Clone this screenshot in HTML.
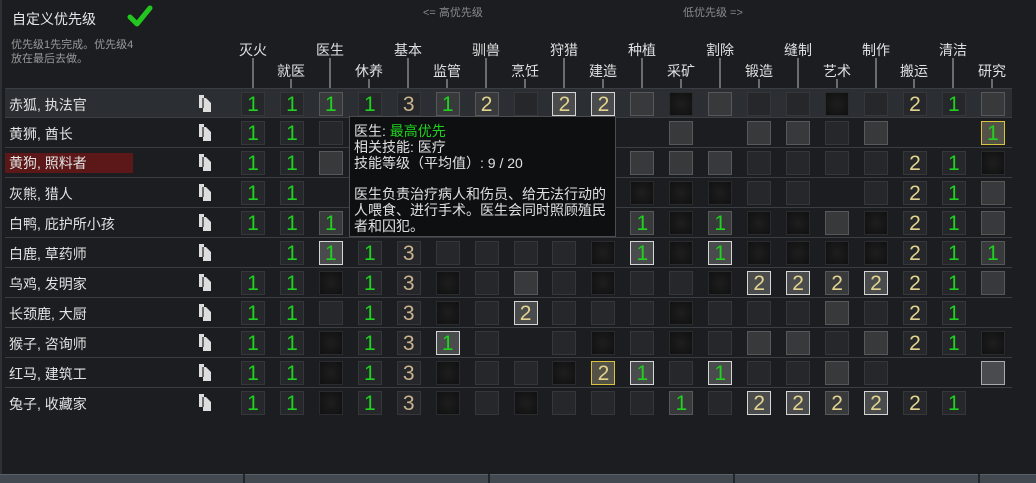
<!DOCTYPE html>
<html><head><meta charset="utf-8"><style>
*{margin:0;padding:0;box-sizing:border-box}
body{width:1036px;height:483px;background:#1b1d21;font-family:"Liberation Sans","Noto Sans CJK SC",sans-serif;color:#ddd;position:relative;overflow:hidden}
.a{position:absolute;white-space:nowrap}
.hd{font-size:14px;color:#e0e0e0;transform:translateX(-50%)}
.vl{position:absolute;width:2px;background:#6a6d70}
.row{position:absolute;left:5px;width:1007px;height:30px;border-bottom:1px solid #3a3d42}
.nm{position:absolute;left:4px;top:6px;font-size:14px;color:#e2e2e2}
.cp{position:absolute;left:194px;top:6px;width:12px;height:17px}
.g20{position:absolute;left:228.5px;top:0;display:grid;grid-template-columns:repeat(20,38.95px);height:30px}
.g20>span{display:flex;align-items:center;justify-content:center}
.b{display:flex;align-items:center;justify-content:center;width:24px;height:24px;border:1px solid #35373a;background:#25272a;font-style:normal;font-size:21px;line-height:1}
.k{background:radial-gradient(#1e1e1e,#101010);border-color:#2a2b2d}
.g{background:#38393b;border-color:#56585a}
.w{background:#4a4b4c;border-color:#d5d5d5}
.y{background:#545246;border-color:#d8c43c}
.n1{color:#1ed21e}.n2{color:#e2d48e}.n3{color:#cbb48e}
</style></head><body>
<div class="a" style="left:0;top:0;width:2px;height:483px;background:#2d3035"></div>
<div class="a" style="left:12px;top:9px;font-size:14px;color:#e6e6e6">自定义优先级</div>
<svg class="a" style="left:127px;top:4px" width="26" height="24" viewBox="0 0 26 24"><path d="M3 13 L10 20 L23 4" stroke="#22c61e" stroke-width="5" fill="none" stroke-linecap="round" stroke-linejoin="round"/></svg>
<div class="a" style="left:11px;top:38px;font-size:11px;line-height:14px;color:#9a9a9a">优先级1先完成。优先级4<br>放在最后去做。</div>
<div class="a" style="left:423px;top:4px;font-size:11px;color:#8a8a8a">&lt;= 高优先级</div>
<div class="a" style="left:683px;top:4px;font-size:11px;color:#8a8a8a">低优先级 =&gt;</div>

<div class="a hd" style="left:253px;top:40px">灭火</div><div class="vl" style="left:252px;top:58px;height:30px"></div>
<div class="a hd" style="left:291px;top:61px">就医</div><div class="vl" style="left:290px;top:79px;height:9px"></div>
<div class="a hd" style="left:330px;top:40px">医生</div><div class="vl" style="left:329px;top:58px;height:30px"></div>
<div class="a hd" style="left:369px;top:61px">休养</div><div class="vl" style="left:368px;top:79px;height:9px"></div>
<div class="a hd" style="left:408px;top:40px">基本</div><div class="vl" style="left:407px;top:58px;height:30px"></div>
<div class="a hd" style="left:447px;top:61px">监管</div><div class="vl" style="left:446px;top:79px;height:9px"></div>
<div class="a hd" style="left:486px;top:40px">驯兽</div><div class="vl" style="left:485px;top:58px;height:30px"></div>
<div class="a hd" style="left:525px;top:61px">烹饪</div><div class="vl" style="left:524px;top:79px;height:9px"></div>
<div class="a hd" style="left:564px;top:40px">狩猎</div><div class="vl" style="left:563px;top:58px;height:30px"></div>
<div class="a hd" style="left:603px;top:61px">建造</div><div class="vl" style="left:602px;top:79px;height:9px"></div>
<div class="a hd" style="left:642px;top:40px">种植</div><div class="vl" style="left:641px;top:58px;height:30px"></div>
<div class="a hd" style="left:681px;top:61px">采矿</div><div class="vl" style="left:680px;top:79px;height:9px"></div>
<div class="a hd" style="left:720px;top:40px">割除</div><div class="vl" style="left:719px;top:58px;height:30px"></div>
<div class="a hd" style="left:759px;top:61px">锻造</div><div class="vl" style="left:758px;top:79px;height:9px"></div>
<div class="a hd" style="left:798px;top:40px">缝制</div><div class="vl" style="left:797px;top:58px;height:30px"></div>
<div class="a hd" style="left:837px;top:61px">艺术</div><div class="vl" style="left:836px;top:79px;height:9px"></div>
<div class="a hd" style="left:876px;top:40px">制作</div><div class="vl" style="left:875px;top:58px;height:30px"></div>
<div class="a hd" style="left:914px;top:61px">搬运</div><div class="vl" style="left:913px;top:79px;height:9px"></div>
<div class="a hd" style="left:953px;top:40px">清洁</div><div class="vl" style="left:952px;top:58px;height:30px"></div>
<div class="a hd" style="left:992px;top:61px">研究</div><div class="vl" style="left:991px;top:79px;height:9px"></div>

<div class="row" style="top:88px;background:#2b2e32;border-top:1px solid #3a3d42"><div class="nm">赤狐, 执法官</div><svg class="cp" viewBox="0 0 12 17"><path d="M0 0h5v3h2l5 5v9H4v-4H0z" fill="#ddd"/><path d="M4 3v10" stroke="#222" stroke-width="1.2"/></svg>
<div class="g20"><span><i class="b n1">1</i></span><span><i class="b n1">1</i></span><span><i class="b g n1">1</i></span><span><i class="b n1">1</i></span><span><i class="b n3">3</i></span><span><i class="b g n1">1</i></span><span><i class="b g n2">2</i></span><span><i class="b"></i></span><span><i class="b w n2">2</i></span><span><i class="b w n2">2</i></span><span><i class="b g"></i></span><span><i class="b k"></i></span><span><i class="b g"></i></span><span><i class="b"></i></span><span><i class="b"></i></span><span><i class="b k"></i></span><span><i class="b"></i></span><span><i class="b n2">2</i></span><span><i class="b n1">1</i></span><span><i class="b g"></i></span></div></div>

<div class="row" style="top:118px"><div class="nm">黄狮, 酋长</div><svg class="cp" viewBox="0 0 12 17"><path d="M0 0h5v3h2l5 5v9H4v-4H0z" fill="#ddd"/><path d="M4 3v10" stroke="#222" stroke-width="1.2"/></svg>
<div class="g20"><span><i class="b n1">1</i></span><span><i class="b n1">1</i></span><span><i class="b"></i></span><span></span><span></span><span></span><span></span><span></span><span></span><span></span><span></span><span><i class="b g"></i></span><span></span><span><i class="b g"></i></span><span><i class="b g"></i></span><span><i class="b"></i></span><span><i class="b g"></i></span><span></span><span></span><span><i class="b y n1">1</i></span></div></div>

<div class="row" style="top:148px"><div class="nm" style="background:#5c1818;left:0;padding:0 8px 0 4px;width:128px;top:5px;height:20px">黄狗, 照料者</div><svg class="cp" viewBox="0 0 12 17"><path d="M0 0h5v3h2l5 5v9H4v-4H0z" fill="#ddd"/><path d="M4 3v10" stroke="#222" stroke-width="1.2"/></svg>
<div class="g20"><span><i class="b n1">1</i></span><span><i class="b n1">1</i></span><span><i class="b g"></i></span><span></span><span></span><span></span><span></span><span></span><span></span><span></span><span><i class="b g"></i></span><span><i class="b g"></i></span><span><i class="b g"></i></span><span><i class="b"></i></span><span><i class="b"></i></span><span><i class="b"></i></span><span><i class="b"></i></span><span><i class="b n2">2</i></span><span><i class="b n1">1</i></span><span><i class="b k"></i></span></div></div>

<div class="row" style="top:178px"><div class="nm">灰熊, 猎人</div><svg class="cp" viewBox="0 0 12 17"><path d="M0 0h5v3h2l5 5v9H4v-4H0z" fill="#ddd"/><path d="M4 3v10" stroke="#222" stroke-width="1.2"/></svg>
<div class="g20"><span><i class="b n1">1</i></span><span><i class="b n1">1</i></span><span></span><span></span><span></span><span></span><span></span><span></span><span></span><span></span><span><i class="b k"></i></span><span><i class="b k"></i></span><span><i class="b k"></i></span><span><i class="b"></i></span><span><i class="b"></i></span><span></span><span><i class="b"></i></span><span><i class="b n2">2</i></span><span><i class="b n1">1</i></span><span><i class="b g"></i></span></div></div>

<div class="row" style="top:208px"><div class="nm">白鸭, 庇护所小孩</div><svg class="cp" viewBox="0 0 12 17"><path d="M0 0h5v3h2l5 5v9H4v-4H0z" fill="#ddd"/><path d="M4 3v10" stroke="#222" stroke-width="1.2"/></svg>
<div class="g20"><span><i class="b n1">1</i></span><span><i class="b n1">1</i></span><span><i class="b g n1">1</i></span><span></span><span></span><span></span><span></span><span></span><span></span><span></span><span><i class="b g n1">1</i></span><span><i class="b k"></i></span><span><i class="b g n1">1</i></span><span><i class="b k"></i></span><span><i class="b k"></i></span><span><i class="b g"></i></span><span><i class="b k"></i></span><span><i class="b n2">2</i></span><span><i class="b n1">1</i></span><span><i class="b g"></i></span></div></div>

<div class="row" style="top:238px"><div class="nm">白鹿, 草药师</div><svg class="cp" viewBox="0 0 12 17"><path d="M0 0h5v3h2l5 5v9H4v-4H0z" fill="#ddd"/><path d="M4 3v10" stroke="#222" stroke-width="1.2"/></svg>
<div class="g20"><span></span><span><i class="b n1">1</i></span><span><i class="b w n1">1</i></span><span><i class="b n1">1</i></span><span><i class="b n3">3</i></span><span><i class="b"></i></span><span><i class="b"></i></span><span><i class="b"></i></span><span><i class="b"></i></span><span><i class="b k"></i></span><span><i class="b w n1">1</i></span><span><i class="b k"></i></span><span><i class="b w n1">1</i></span><span><i class="b k"></i></span><span><i class="b k"></i></span><span><i class="b k"></i></span><span><i class="b k"></i></span><span><i class="b n2">2</i></span><span><i class="b n1">1</i></span><span><i class="b g n1">1</i></span></div></div>

<div class="row" style="top:268px"><div class="nm">乌鸡, 发明家</div><svg class="cp" viewBox="0 0 12 17"><path d="M0 0h5v3h2l5 5v9H4v-4H0z" fill="#ddd"/><path d="M4 3v10" stroke="#222" stroke-width="1.2"/></svg>
<div class="g20"><span><i class="b n1">1</i></span><span><i class="b n1">1</i></span><span><i class="b k"></i></span><span><i class="b n1">1</i></span><span><i class="b n3">3</i></span><span><i class="b k"></i></span><span><i class="b"></i></span><span><i class="b g"></i></span><span><i class="b"></i></span><span><i class="b k"></i></span><span><i class="b"></i></span><span><i class="b"></i></span><span><i class="b k"></i></span><span><i class="b w n2">2</i></span><span><i class="b w n2">2</i></span><span><i class="b g n2">2</i></span><span><i class="b w n2">2</i></span><span><i class="b n2">2</i></span><span><i class="b n1">1</i></span><span><i class="b g"></i></span></div></div>

<div class="row" style="top:298px"><div class="nm">长颈鹿, 大厨</div><svg class="cp" viewBox="0 0 12 17"><path d="M0 0h5v3h2l5 5v9H4v-4H0z" fill="#ddd"/><path d="M4 3v10" stroke="#222" stroke-width="1.2"/></svg>
<div class="g20"><span><i class="b n1">1</i></span><span><i class="b n1">1</i></span><span><i class="b"></i></span><span><i class="b n1">1</i></span><span><i class="b n3">3</i></span><span><i class="b k"></i></span><span><i class="b"></i></span><span><i class="b w n2">2</i></span><span><i class="b"></i></span><span><i class="b"></i></span><span><i class="b"></i></span><span><i class="b k"></i></span><span><i class="b"></i></span><span><i class="b"></i></span><span><i class="b"></i></span><span><i class="b g"></i></span><span><i class="b"></i></span><span><i class="b n2">2</i></span><span><i class="b n1">1</i></span><span></span></div></div>

<div class="row" style="top:328px"><div class="nm">猴子, 咨询师</div><svg class="cp" viewBox="0 0 12 17"><path d="M0 0h5v3h2l5 5v9H4v-4H0z" fill="#ddd"/><path d="M4 3v10" stroke="#222" stroke-width="1.2"/></svg>
<div class="g20"><span><i class="b n1">1</i></span><span><i class="b n1">1</i></span><span><i class="b k"></i></span><span><i class="b n1">1</i></span><span><i class="b n3">3</i></span><span><i class="b w n1">1</i></span><span><i class="b"></i></span><span></span><span><i class="b"></i></span><span><i class="b k"></i></span><span><i class="b"></i></span><span><i class="b k"></i></span><span><i class="b"></i></span><span><i class="b g"></i></span><span><i class="b g"></i></span><span><i class="b"></i></span><span><i class="b g"></i></span><span><i class="b n2">2</i></span><span><i class="b n1">1</i></span><span><i class="b k"></i></span></div></div>

<div class="row" style="top:358px"><div class="nm">红马, 建筑工</div><svg class="cp" viewBox="0 0 12 17"><path d="M0 0h5v3h2l5 5v9H4v-4H0z" fill="#ddd"/><path d="M4 3v10" stroke="#222" stroke-width="1.2"/></svg>
<div class="g20"><span><i class="b n1">1</i></span><span><i class="b n1">1</i></span><span><i class="b k"></i></span><span><i class="b n1">1</i></span><span><i class="b n3">3</i></span><span><i class="b k"></i></span><span><i class="b"></i></span><span><i class="b"></i></span><span><i class="b k"></i></span><span><i class="b y n2">2</i></span><span><i class="b w n1">1</i></span><span><i class="b"></i></span><span><i class="b w n1">1</i></span><span><i class="b"></i></span><span><i class="b"></i></span><span><i class="b g"></i></span><span><i class="b"></i></span><span></span><span></span><span><i class="b w" style="border-color:#aaa"></i></span></div></div>

<div class="row" style="top:388px;border-bottom:none"><div class="nm">兔子, 收藏家</div><svg class="cp" viewBox="0 0 12 17"><path d="M0 0h5v3h2l5 5v9H4v-4H0z" fill="#ddd"/><path d="M4 3v10" stroke="#222" stroke-width="1.2"/></svg>
<div class="g20"><span><i class="b n1">1</i></span><span><i class="b n1">1</i></span><span><i class="b k"></i></span><span><i class="b n1">1</i></span><span><i class="b n3">3</i></span><span><i class="b k"></i></span><span><i class="b"></i></span><span><i class="b k"></i></span><span><i class="b"></i></span><span><i class="b"></i></span><span><i class="b"></i></span><span><i class="b g n1">1</i></span><span><i class="b"></i></span><span><i class="b w n2">2</i></span><span><i class="b w n2">2</i></span><span><i class="b g n2">2</i></span><span><i class="b w n2">2</i></span><span><i class="b n2">2</i></span><span><i class="b n1">1</i></span><span></span></div></div>

<div class="a" style="left:349px;top:116px;width:267px;height:121px;background:#0e0f11;border:1px solid #4a4c50;font-size:14px;line-height:16px;color:#e0e0e0;padding:6px 8px 0 4px;white-space:normal">医生: <span style="color:#1ed21e">最高优先</span><br>相关技能: 医疗<br>技能等级（平均值）: 9 / 20<br><div style="margin-top:15px;width:254px">医生负责治疗病人和伤员、给无法行动的人喂食、进行手术。医生会同时照顾殖民者和囚犯。</div></div>

<div class="a" style="left:0;top:474px;width:1036px;height:9px;background:#434950;border-top:1px solid #5a6068"></div>
<div class="a" style="left:243px;top:474px;width:2px;height:9px;background:#22262a"></div>
<div class="a" style="left:488px;top:474px;width:2px;height:9px;background:#22262a"></div>
<div class="a" style="left:733px;top:474px;width:2px;height:9px;background:#22262a"></div>
<div class="a" style="left:978px;top:474px;width:2px;height:9px;background:#22262a"></div>
</body></html>
